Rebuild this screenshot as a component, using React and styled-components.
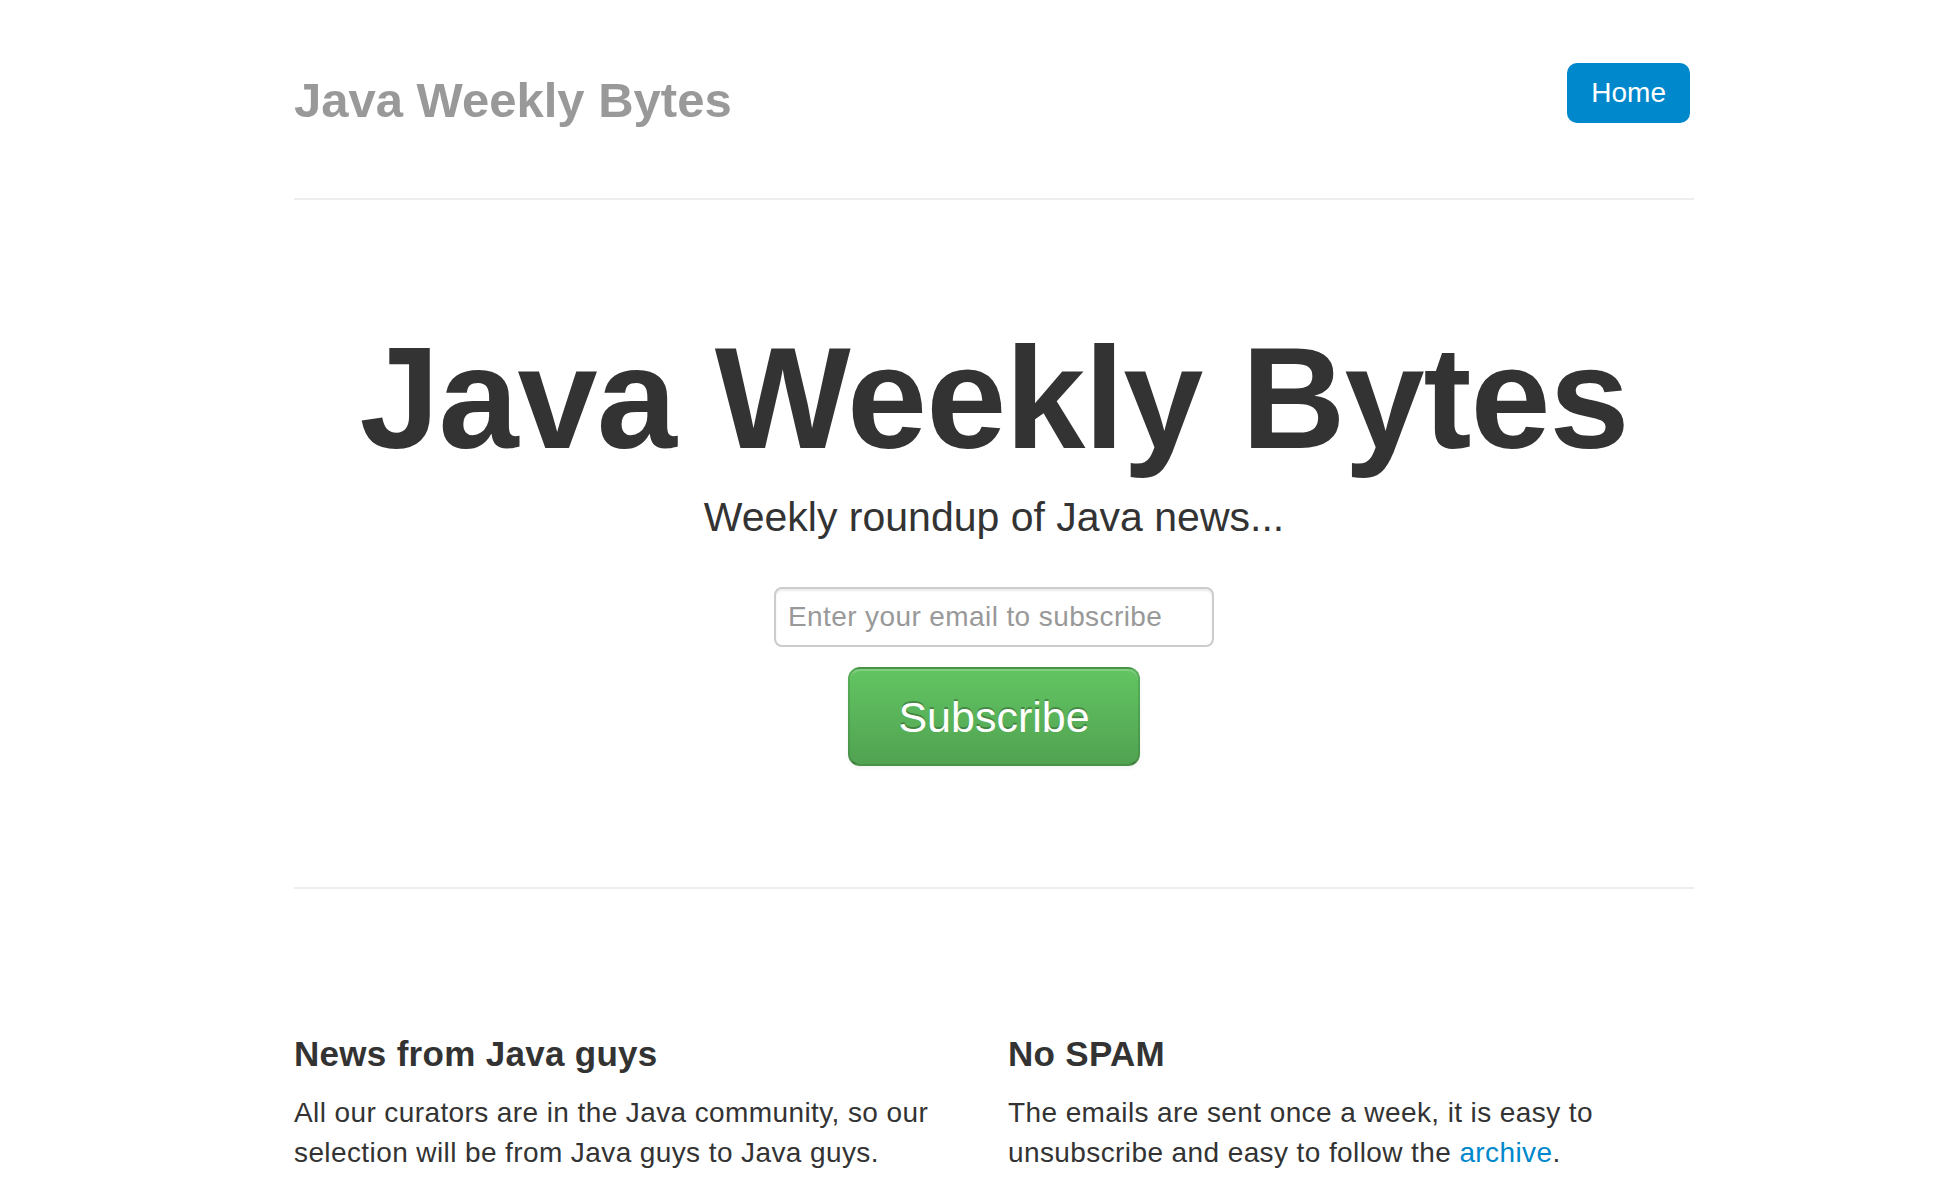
import React from 'react';
import styled, { createGlobalStyle } from 'styled-components';

const GlobalStyle = createGlobalStyle`
  html, body {
    margin: 0;
    padding: 0;
    background: #fff;
  }
  body {
    font-family: 'Liberation Sans', Arial, sans-serif;
    font-size: 28px;
    line-height: 40px;
    color: #333;
  }
`;

const Container = styled.div`
  width: 1400px;
  margin-left: 294px;
  padding-top: 40px;
`;

const Masthead = styled.header`
  display: flex;
  justify-content: space-between;
  align-items: flex-start;
`;

const Brand = styled.h3`
  margin: 20px 0;
  font-size: 49px;
  line-height: 80px;
  font-weight: bold;
  color: #999;
`;

const Nav = styled.nav`
  margin-top: 23px;
  margin-right: 4px;
`;

const Pill = styled.a`
  display: block;
  padding: 16px 24px;
  line-height: 28px;
  font-size: 28px;
  color: #fff;
  background-color: #0088cc;
  border-radius: 10px;
  text-decoration: none;
`;

const Rule = styled.hr`
  margin: ${(p) => p.$top}px 0 0;
  height: 0;
  border: 0;
  border-top: 2px solid #eee;
  border-bottom: 2px solid #fff;
`;

const Jumbotron = styled.section`
  margin-top: 125px;
  text-align: center;
`;

const Title = styled.h1`
  margin: 0;
  font-size: 144px;
  line-height: 144px;
  font-weight: bold;
  letter-spacing: -1px;
  color: #333;
`;

const Lead = styled.p`
  margin: 16px 0 0;
  font-size: 41px;
  line-height: 60px;
  font-weight: 300;
  color: #333;
`;

const SubscribeForm = styled.form`
  display: flex;
  flex-direction: column;
  align-items: center;
  gap: 20px;
  margin-top: 40px;
`;

const EmailInput = styled.input`
  box-sizing: border-box;
  width: 440px;
  height: 60px;
  padding: 8px 12px;
  font-family: 'Liberation Sans', Arial, sans-serif;
  font-size: 28px;
  line-height: 40px;
  letter-spacing: 0.4px;
  color: #555;
  border: 2px solid #ccc;
  border-radius: 8px;
  box-shadow: inset 0 2px 2px rgba(0, 0, 0, 0.075);
  outline: none;

  &::placeholder {
    color: #999;
  }
`;

const SuccessButton = styled.button`
  box-sizing: border-box;
  height: 99px;
  padding: 0 48px;
  font-family: 'Liberation Sans', Arial, sans-serif;
  font-size: 43px;
  line-height: 40px;
  color: #fff;
  text-shadow: 0 -2px 0 rgba(0, 0, 0, 0.25);
  background-image: linear-gradient(to bottom, #62c462, #51a351);
  border: 2px solid rgba(0, 0, 0, 0.1);
  border-bottom-color: rgba(0, 0, 0, 0.25);
  border-radius: 12px;
  box-shadow: inset 0 2px 0 rgba(255, 255, 255, 0.2),
    0 2px 4px rgba(0, 0, 0, 0.05);
  cursor: pointer;
`;

const Marketing = styled.section`
  display: grid;
  grid-template-columns: 1fr 1fr;
  column-gap: 28px;
  margin-top: 143px;
`;

const Heading = styled.h4`
  margin: 0;
  font-size: 35px;
  line-height: 40px;
  font-weight: bold;
  letter-spacing: 0.3px;
  color: #333;
`;

const Text = styled.p`
  margin: 19px 0 0;
  font-size: 28px;
  line-height: 40px;
  letter-spacing: 0.4px;
`;

const TextLink = styled.a`
  color: #0088cc;
  text-decoration: none;
`;

const features = [
  {
    title: 'News from Java guys',
    body: 'All our curators are in the Java community, so our selection will be from Java guys to Java guys.',
  },
  {
    title: 'No SPAM',
    body: 'The emails are sent once a week, it is easy to unsubscribe and easy to follow the ',
    link: 'archive',
  },
];

const App = () => (
  <>
    <GlobalStyle />
    <Container>
      <Masthead>
        <Brand>Java Weekly Bytes</Brand>
        <Nav>
          <Pill href="#">Home</Pill>
        </Nav>
      </Masthead>
      <Rule $top={38} />

      <Jumbotron>
        <Title>Java Weekly Bytes</Title>
        <Lead>Weekly roundup of Java news...</Lead>
        <SubscribeForm onSubmit={(e) => e.preventDefault()}>
          <EmailInput type="email" placeholder="Enter your email to subscribe" />
          <SuccessButton type="submit">Subscribe</SuccessButton>
        </SubscribeForm>
      </Jumbotron>

      <Rule $top={121} />

      <Marketing>
        {features.map((f) => (
          <div key={f.title}>
            <Heading>{f.title}</Heading>
            <Text>
              {f.body}
              {f.link && <TextLink href="#">{f.link}</TextLink>}
              {f.link && '.'}
            </Text>
          </div>
        ))}
      </Marketing>
    </Container>
  </>
);

export default App;
